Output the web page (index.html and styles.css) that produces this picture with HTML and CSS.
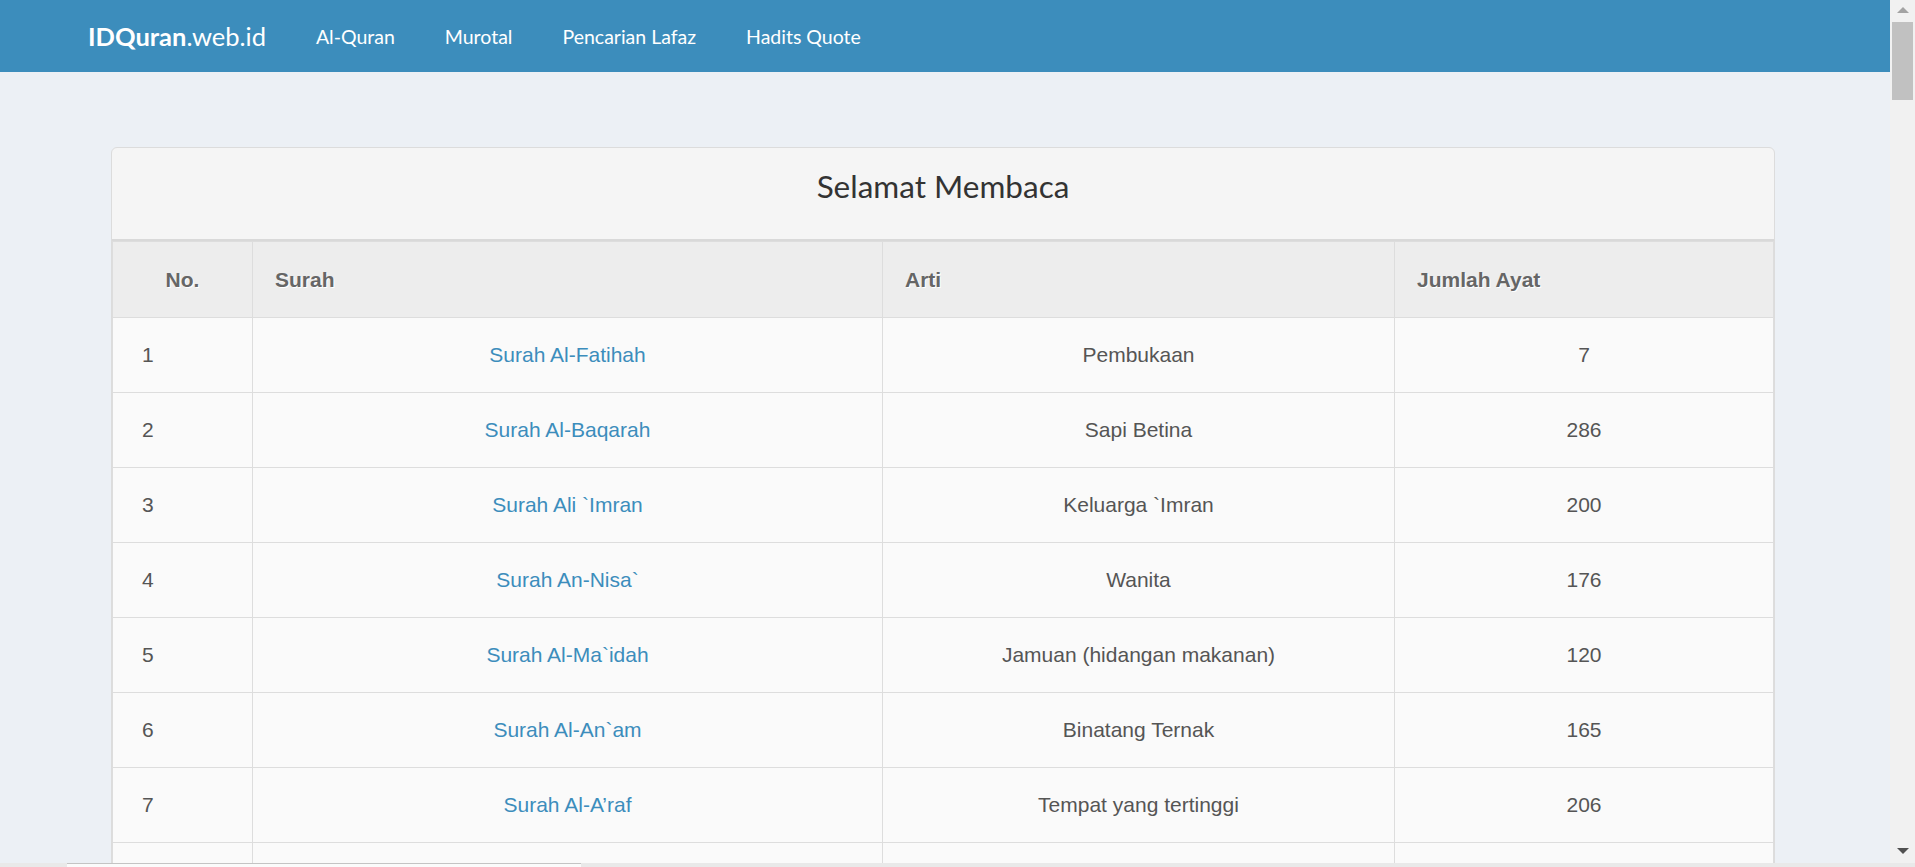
FILE: index.html
```html
<!DOCTYPE html>
<html lang="id">
<head>
<meta charset="utf-8">
<title>IDQuran.web.id</title>
<link rel="stylesheet" href="styles.css">
</head>
<body>
<header class="navbar">
  <a class="brand" href="#"><b>IDQuran</b>.web.id</a>
  <nav class="nav-links">
    <a href="#">Al-Quran</a>
    <a href="#">Murotal</a>
    <a href="#">Pencarian Lafaz</a>
    <a href="#">Hadits Quote</a>
  </nav>
</header>
<main class="content">
  <section class="card">
    <div class="card-header"><h3 class="card-title">Selamat Membaca</h3></div>
    <table class="surah-table">
      <colgroup>
        <col class="c-no"><col class="c-surah"><col class="c-arti"><col class="c-ayat">
      </colgroup>
      <thead>
        <tr><th class="th-no">No.</th><th>Surah</th><th>Arti</th><th>Jumlah Ayat</th></tr>
      </thead>
      <tbody>
        <tr><td>1</td><td><a href="#">Surah Al-Fatihah</a></td><td>Pembukaan</td><td>7</td></tr>
        <tr><td>2</td><td><a href="#">Surah Al-Baqarah</a></td><td>Sapi Betina</td><td>286</td></tr>
        <tr><td>3</td><td><a href="#">Surah Ali `Imran</a></td><td>Keluarga `Imran</td><td>200</td></tr>
        <tr><td>4</td><td><a href="#">Surah An-Nisa`</a></td><td>Wanita</td><td>176</td></tr>
        <tr><td>5</td><td><a href="#">Surah Al-Ma`idah</a></td><td>Jamuan (hidangan makanan)</td><td>120</td></tr>
        <tr><td>6</td><td><a href="#">Surah Al-An`am</a></td><td>Binatang Ternak</td><td>165</td></tr>
        <tr><td>7</td><td><a href="#">Surah Al-A’raf</a></td><td>Tempat yang tertinggi</td><td>206</td></tr>
        <tr><td>8</td><td><a href="#">Surah Al-Anfal</a></td><td>Harta rampasan perang</td><td>75</td></tr>
        <tr><td>9</td><td><a href="#">Surah At-Taubah</a></td><td>Pengampunan</td><td>129</td></tr>
        <tr><td>10</td><td><a href="#">Surah Yunus</a></td><td>Nabi Yunus</td><td>109</td></tr>
        <tr><td>11</td><td><a href="#">Surah Hud</a></td><td>Nabi Hud</td><td>123</td></tr>
        <tr><td>12</td><td><a href="#">Surah Yusuf</a></td><td>Nabi Yusuf</td><td>111</td></tr>
        <tr><td>13</td><td><a href="#">Surah Ar-Ra`d</a></td><td>Guruh (petir)</td><td>43</td></tr>
        <tr><td>14</td><td><a href="#">Surah Ibrahim</a></td><td>Nabi Ibrahim</td><td>52</td></tr>
        <tr><td>15</td><td><a href="#">Surah Al-Hijr</a></td><td>Daerah pegunungan</td><td>99</td></tr>
        <tr><td>16</td><td><a href="#">Surah An-Nahl</a></td><td>Lebah</td><td>128</td></tr>
        <tr><td>17</td><td><a href="#">Surah Al-Isra`</a></td><td>Perjalanan Malam</td><td>111</td></tr>
        <tr><td>18</td><td><a href="#">Surah Al-Kahf</a></td><td>Penghuni-penghuni gua</td><td>110</td></tr>
        <tr><td>19</td><td><a href="#">Surah Maryam</a></td><td>Maryam (Siti Maryam)</td><td>98</td></tr>
        <tr><td>20</td><td><a href="#">Surah Ta Ha</a></td><td>Ta Ha</td><td>135</td></tr>
        <tr><td>21</td><td><a href="#">Surah Al-Anbiya</a></td><td>Nabi-Nabi</td><td>112</td></tr>
        <tr><td>22</td><td><a href="#">Surah Al-Hajj</a></td><td>Haji</td><td>78</td></tr>
        <tr><td>23</td><td><a href="#">Surah Al-Mu`minun</a></td><td>Orang-orang mukmin</td><td>118</td></tr>
        <tr><td>24</td><td><a href="#">Surah An-Nur</a></td><td>Cahaya</td><td>64</td></tr>
        <tr><td>25</td><td><a href="#">Surah Al-Furqan</a></td><td>Pembeda</td><td>77</td></tr>
        <tr><td>26</td><td><a href="#">Surah Asy-Syu`ara`</a></td><td>Penyair</td><td>227</td></tr>
        <tr><td>27</td><td><a href="#">Surah An-Naml</a></td><td>Semut</td><td>93</td></tr>
        <tr><td>28</td><td><a href="#">Surah Al-Qasas</a></td><td>Kisah-kisah</td><td>88</td></tr>
        <tr><td>29</td><td><a href="#">Surah Al-`Ankabut</a></td><td>Laba-laba</td><td>69</td></tr>
        <tr><td>30</td><td><a href="#">Surah Ar-Rum</a></td><td>Bangsa Romawi</td><td>60</td></tr>
        <tr><td>31</td><td><a href="#">Surah Luqman</a></td><td>Keluarga Luqman</td><td>34</td></tr>
        <tr><td>32</td><td><a href="#">Surah As-Sajdah</a></td><td>Sajdah</td><td>30</td></tr>
        <tr><td>33</td><td><a href="#">Surah Al-Ahzab</a></td><td>Golongan-golongan yang bersekutu</td><td>73</td></tr>
        <tr><td>34</td><td><a href="#">Surah Saba’</a></td><td>Kaum Saba’</td><td>54</td></tr>
        <tr><td>35</td><td><a href="#">Surah Fatir</a></td><td>Pencipta</td><td>45</td></tr>
        <tr><td>36</td><td><a href="#">Surah Ya Sin</a></td><td>Yaasiin</td><td>83</td></tr>
        <tr><td>37</td><td><a href="#">Surah As-Saffat</a></td><td>Barisan-barisan</td><td>182</td></tr>
        <tr><td>38</td><td><a href="#">Surah Sad</a></td><td>Shaad</td><td>88</td></tr>
        <tr><td>39</td><td><a href="#">Surah Az-Zumar</a></td><td>Rombongan-rombongan</td><td>75</td></tr>
        <tr><td>40</td><td><a href="#">Surah Al-Mu’min</a></td><td>Orang yang beriman</td><td>85</td></tr>
        <tr><td>41</td><td><a href="#">Surah Fussilat</a></td><td>Yang dijelaskan</td><td>54</td></tr>
        <tr><td>42</td><td><a href="#">Surah Asy-Syura</a></td><td>Musyawarah</td><td>53</td></tr>
        <tr><td>43</td><td><a href="#">Surah Az-Zukhruf</a></td><td>Perhiasan</td><td>89</td></tr>
        <tr><td>44</td><td><a href="#">Surah Ad-Dukhan</a></td><td>Kabut</td><td>59</td></tr>
        <tr><td>45</td><td><a href="#">Surah Al-Jasiyah</a></td><td>Yang bertekuk lutut</td><td>37</td></tr>
        <tr><td>46</td><td><a href="#">Surah Al-Ahqaf</a></td><td>Bukit-bukit pasir</td><td>35</td></tr>
        <tr><td>47</td><td><a href="#">Surah Muhammad</a></td><td>Nabi Muhammad</td><td>38</td></tr>
        <tr><td>48</td><td><a href="#">Surah Al-Fath</a></td><td>Kemenangan</td><td>29</td></tr>
        <tr><td>49</td><td><a href="#">Surah Al-Hujurat</a></td><td>Kamar-kamar</td><td>18</td></tr>
        <tr><td>50</td><td><a href="#">Surah Qaf</a></td><td>Qaaf</td><td>45</td></tr>
        <tr><td>51</td><td><a href="#">Surah Az-Zariyat</a></td><td>Angin yang menerbangkan</td><td>60</td></tr>
        <tr><td>52</td><td><a href="#">Surah At-Tur</a></td><td>Bukit</td><td>49</td></tr>
        <tr><td>53</td><td><a href="#">Surah An-Najm</a></td><td>Bintang</td><td>62</td></tr>
        <tr><td>54</td><td><a href="#">Surah Al-Qamar</a></td><td>Bulan</td><td>55</td></tr>
        <tr><td>55</td><td><a href="#">Surah Ar-Rahman</a></td><td>Yang Maha Pemurah</td><td>78</td></tr>
        <tr><td>56</td><td><a href="#">Surah Al-Waqi`ah</a></td><td>Hari Kiamat</td><td>96</td></tr>
        <tr><td>57</td><td><a href="#">Surah Al-Hadid</a></td><td>Besi</td><td>29</td></tr>
        <tr><td>58</td><td><a href="#">Surah Al-Mujadilah</a></td><td>Wanita yang mengajukan gugatan</td><td>22</td></tr>
        <tr><td>59</td><td><a href="#">Surah Al-Hasyr</a></td><td>Pengusiran</td><td>24</td></tr>
        <tr><td>60</td><td><a href="#">Surah Al-Mumtahanah</a></td><td>Wanita yang diuji</td><td>13</td></tr>
        <tr><td>61</td><td><a href="#">Surah As-Saff</a></td><td>Satu barisan</td><td>14</td></tr>
        <tr><td>62</td><td><a href="#">Surah Al-Jumu`ah</a></td><td>Hari Jum`at</td><td>11</td></tr>
        <tr><td>63</td><td><a href="#">Surah Al-Munafiqun</a></td><td>Orang-orang munafik</td><td>11</td></tr>
        <tr><td>64</td><td><a href="#">Surah At-Tagabun</a></td><td>Hari dinampakkan kesalahan-kesalahan</td><td>18</td></tr>
        <tr><td>65</td><td><a href="#">Surah At-Talaq</a></td><td>Talak</td><td>12</td></tr>
        <tr><td>66</td><td><a href="#">Surah At-Tahrim</a></td><td>Mengharamkan</td><td>12</td></tr>
        <tr><td>67</td><td><a href="#">Surah Al-Mulk</a></td><td>Kerajaan</td><td>30</td></tr>
        <tr><td>68</td><td><a href="#">Surah Al-Qalam</a></td><td>Pena</td><td>52</td></tr>
        <tr><td>69</td><td><a href="#">Surah Al-Haqqah</a></td><td>Hari kiamat</td><td>52</td></tr>
        <tr><td>70</td><td><a href="#">Surah Al-Ma`arij</a></td><td>Tempat naik</td><td>44</td></tr>
        <tr><td>71</td><td><a href="#">Surah Nuh</a></td><td>Nabi Nuh</td><td>28</td></tr>
        <tr><td>72</td><td><a href="#">Surah Al-Jinn</a></td><td>Jin</td><td>28</td></tr>
        <tr><td>73</td><td><a href="#">Surah Al-Muzzammil</a></td><td>Orang yang berselimut</td><td>20</td></tr>
        <tr><td>74</td><td><a href="#">Surah Al-Muddassir</a></td><td>Orang yang berkemul</td><td>56</td></tr>
        <tr><td>75</td><td><a href="#">Surah Al-Qiyamah</a></td><td>Hari kiamat</td><td>40</td></tr>
        <tr><td>76</td><td><a href="#">Surah Al-Insan</a></td><td>Manusia</td><td>31</td></tr>
        <tr><td>77</td><td><a href="#">Surah Al-Mursalat</a></td><td>Malaikat-Malaikat Yang Diutus</td><td>50</td></tr>
        <tr><td>78</td><td><a href="#">Surah An-Naba`</a></td><td>Berita besar</td><td>40</td></tr>
        <tr><td>79</td><td><a href="#">Surah An-Nazi`at</a></td><td>Malaikat-Malaikat Yang Mencabut</td><td>46</td></tr>
        <tr><td>80</td><td><a href="#">Surah `Abasa</a></td><td>Ia Bermuka masam</td><td>42</td></tr>
        <tr><td>81</td><td><a href="#">Surah At-Takwir</a></td><td>Menggulung</td><td>29</td></tr>
        <tr><td>82</td><td><a href="#">Surah Al-Infitar</a></td><td>Terbelah</td><td>19</td></tr>
        <tr><td>83</td><td><a href="#">Surah Al-Tatfif</a></td><td>Orang-orang yang curang</td><td>36</td></tr>
        <tr><td>84</td><td><a href="#">Surah Al-Insyiqaq</a></td><td>Terbelah</td><td>25</td></tr>
        <tr><td>85</td><td><a href="#">Surah Al-Buruj</a></td><td>Gugusan bintang</td><td>22</td></tr>
        <tr><td>86</td><td><a href="#">Surah At-Tariq</a></td><td>Yang datang di malam hari</td><td>17</td></tr>
        <tr><td>87</td><td><a href="#">Surah Al-A`la</a></td><td>Yang paling tinggi</td><td>19</td></tr>
        <tr><td>88</td><td><a href="#">Surah Al-Gasyiyah</a></td><td>Hari Pembalasan</td><td>26</td></tr>
        <tr><td>89</td><td><a href="#">Surah Al-Fajr</a></td><td>Fajar</td><td>30</td></tr>
        <tr><td>90</td><td><a href="#">Surah Al-Balad</a></td><td>Negeri</td><td>20</td></tr>
        <tr><td>91</td><td><a href="#">Surah Asy-Syams</a></td><td>Matahari</td><td>15</td></tr>
        <tr><td>92</td><td><a href="#">Surah Al-Lail</a></td><td>Malam</td><td>21</td></tr>
        <tr><td>93</td><td><a href="#">Surah Ad-Duha</a></td><td>Waktu matahari sepenggalahan naik (Dhuha)</td><td>11</td></tr>
        <tr><td>94</td><td><a href="#">Surah Al-Insyirah</a></td><td>Melapangkan</td><td>8</td></tr>
        <tr><td>95</td><td><a href="#">Surah At-Tin</a></td><td>Buah Tin</td><td>8</td></tr>
        <tr><td>96</td><td><a href="#">Surah Al-`Alaq</a></td><td>Segumpal Darah</td><td>19</td></tr>
        <tr><td>97</td><td><a href="#">Surah Al-Qadr</a></td><td>Kemuliaan</td><td>5</td></tr>
        <tr><td>98</td><td><a href="#">Surah Al-Bayyinah</a></td><td>Pembuktian</td><td>8</td></tr>
        <tr><td>99</td><td><a href="#">Surah Az-Zalzalah</a></td><td>Kegoncangan</td><td>8</td></tr>
        <tr><td>100</td><td><a href="#">Surah Al-`Adiyat</a></td><td>Berlari kencang</td><td>11</td></tr>
        <tr><td>101</td><td><a href="#">Surah Al-Qari`ah</a></td><td>Hari Kiamat</td><td>11</td></tr>
        <tr><td>102</td><td><a href="#">Surah At-Takasur</a></td><td>Bermegah-megahan</td><td>8</td></tr>
        <tr><td>103</td><td><a href="#">Surah Al-`Asr</a></td><td>Masa</td><td>3</td></tr>
        <tr><td>104</td><td><a href="#">Surah Al-Humazah</a></td><td>Pengumpat</td><td>9</td></tr>
        <tr><td>105</td><td><a href="#">Surah Al-Fil</a></td><td>Gajah</td><td>5</td></tr>
        <tr><td>106</td><td><a href="#">Surah Quraisy</a></td><td>Suku Quraisy</td><td>4</td></tr>
        <tr><td>107</td><td><a href="#">Surah Al-Ma`un</a></td><td>Barang-barang yang berguna</td><td>7</td></tr>
        <tr><td>108</td><td><a href="#">Surah Al-Kausar</a></td><td>Nikmat yang berlimpah</td><td>3</td></tr>
        <tr><td>109</td><td><a href="#">Surah Al-Kafirun</a></td><td>Orang-orang kafir</td><td>6</td></tr>
        <tr><td>110</td><td><a href="#">Surah An-Nasr</a></td><td>Pertolongan</td><td>3</td></tr>
        <tr><td>111</td><td><a href="#">Surah Al-Lahab</a></td><td>Gejolak Api</td><td>5</td></tr>
        <tr><td>112</td><td><a href="#">Surah Al-Ikhlas</a></td><td>Ikhlas</td><td>4</td></tr>
        <tr><td>113</td><td><a href="#">Surah Al-Falaq</a></td><td>Waktu Subuh</td><td>5</td></tr>
        <tr><td>114</td><td><a href="#">Surah An-Nas</a></td><td>Umat Manusia</td><td>6</td></tr>
      </tbody>
    </table>
  </section>
</main>
<div class="vscroll" aria-hidden="true">
  <span class="vs-up"></span>
  <span class="vs-thumb"></span>
  <span class="vs-down"></span>
</div>
<div class="hscroll" aria-hidden="true"><span class="hs-thumb"></span></div>
</body>
</html>
```
FILE: styles.css
```css
html, body {
  margin: 0;
  padding: 0;
}

body {
  background: #ecf0f5;
  font-family: Lato, "Source Sans Pro", "Liberation Sans", sans-serif;
  color: #333;
}

/* ---------- navbar ---------- */
.navbar {
  height: 72px;
  background: #3c8dbc;
  display: flex;
  align-items: center;
  padding-left: 88px;
}

.brand {
  color: #fff;
  text-decoration: none;
  font-size: 25.5px;
  margin-right: 25px;
}

.brand b {
  font-weight: 700;
}

.nav-links {
  display: flex;
  align-items: center;
}

.nav-links a {
  color: #fff;
  text-decoration: none;
  font-size: 19.5px;
  padding: 0 25px;
}

/* ---------- content ---------- */
.content {
  padding: 75px 140px 40px 111px;
}

.card {
  background: #f5f5f5;
  border: 1px solid #dcdcdc;
  border-radius: 6px;
  overflow: hidden;
}

.card-header {
  height: 70px;
  padding-top: 21px;
  border-bottom: 2px solid #d9d9d9;
  text-align: center;
}

.card-title {
  margin: 0;
  font-size: 31.5px;
  line-height: 35px;
  font-weight: 400;
  color: #333;
}

/* ---------- table ---------- */
.surah-table {
  width: 100%;
  border-collapse: collapse;
  table-layout: fixed;
  font-family: "Liberation Sans", Arial, sans-serif;
  font-size: 21px;
}

.c-no { width: 140px; }
.c-surah { width: 630px; }
.c-arti { width: 512px; }

.surah-table th,
.surah-table td {
  border: 1px solid #dddddd;
  height: 74px;
  padding: 0 22px;
  vertical-align: middle;
}

.surah-table th {
  height: 75px;
  background: #ededed;
  color: #666;
  font-weight: 700;
  text-align: left;
  text-shadow: 1px 1px 0 #fff;
}

.surah-table th.th-no {
  text-align: center;
}

.surah-table td {
  background: #fafafa;
  color: #555;
  text-align: center;
}

.surah-table td:first-child {
  text-align: left;
  padding-left: 29px;
}

.surah-table td a {
  color: #3c8dbc;
  text-decoration: none;
}

/* ---------- window scrollbars (drawn over the page) ---------- */
.vscroll {
  position: fixed;
  top: 0;
  right: 0;
  width: 25px;
  height: 863px;
  background: #f1f1f1;
  display: flex;
  flex-direction: column;
  align-items: center;
}

.vs-up {
  margin-top: 7px;
  width: 0;
  height: 0;
  border-left: 6px solid transparent;
  border-right: 6px solid transparent;
  border-bottom: 6px solid #a3a3a3;
}

.vs-thumb {
  margin-top: 9px;
  width: 21px;
  height: 78px;
  background: #c1c1c1;
}

.vs-down {
  margin-top: auto;
  margin-bottom: 9px;
  width: 0;
  height: 0;
  border-left: 6px solid transparent;
  border-right: 6px solid transparent;
  border-top: 6px solid #505050;
}

.hscroll {
  position: fixed;
  left: 0;
  right: 0;
  bottom: 0;
  height: 4px;
  background: #e9e9e9;
  display: flex;
}

.hs-thumb {
  margin-left: 67px;
  width: 514px;
  background: #fbfbfb;
  border-top: 1px solid #c4c4c4;
}
```
